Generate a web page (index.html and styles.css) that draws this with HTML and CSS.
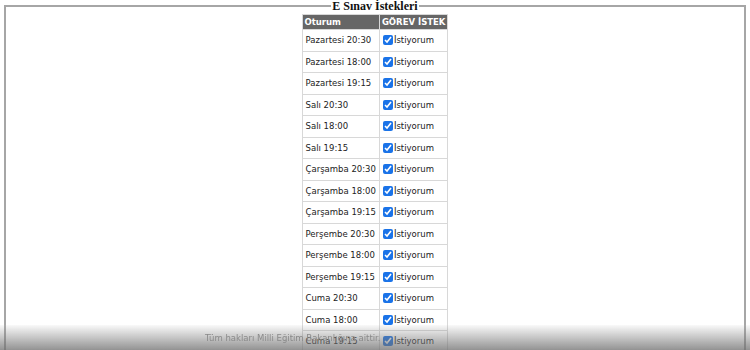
FILE: index.html
```html
<!DOCTYPE html>
<html lang="tr">
<head>
<meta charset="utf-8">
<title>E Sınav İstekleri</title>
<link rel="stylesheet" href="styles.css">
</head>
<body>
<fieldset class="panel">
  <legend class="panel-title">E Sınav İstekleri</legend>
  <table class="grid">
    <thead>
      <tr><th>Oturum</th><th>GÖREV İSTEK</th></tr>
    </thead>
    <tbody>
      <tr><td>Pazartesi 20:30</td><td><label class="opt"><input type="checkbox" checked>İstiyorum</label></td></tr>
      <tr><td>Pazartesi 18:00</td><td><label class="opt"><input type="checkbox" checked>İstiyorum</label></td></tr>
      <tr><td>Pazartesi 19:15</td><td><label class="opt"><input type="checkbox" checked>İstiyorum</label></td></tr>
      <tr><td>Salı 20:30</td><td><label class="opt"><input type="checkbox" checked>İstiyorum</label></td></tr>
      <tr><td>Salı 18:00</td><td><label class="opt"><input type="checkbox" checked>İstiyorum</label></td></tr>
      <tr><td>Salı 19:15</td><td><label class="opt"><input type="checkbox" checked>İstiyorum</label></td></tr>
      <tr><td>Çarşamba 20:30</td><td><label class="opt"><input type="checkbox" checked>İstiyorum</label></td></tr>
      <tr><td>Çarşamba 18:00</td><td><label class="opt"><input type="checkbox" checked>İstiyorum</label></td></tr>
      <tr><td>Çarşamba 19:15</td><td><label class="opt"><input type="checkbox" checked>İstiyorum</label></td></tr>
      <tr><td>Perşembe 20:30</td><td><label class="opt"><input type="checkbox" checked>İstiyorum</label></td></tr>
      <tr><td>Perşembe 18:00</td><td><label class="opt"><input type="checkbox" checked>İstiyorum</label></td></tr>
      <tr><td>Perşembe 19:15</td><td><label class="opt"><input type="checkbox" checked>İstiyorum</label></td></tr>
      <tr><td>Cuma 20:30</td><td><label class="opt"><input type="checkbox" checked>İstiyorum</label></td></tr>
      <tr><td>Cuma 18:00</td><td><label class="opt"><input type="checkbox" checked>İstiyorum</label></td></tr>
      <tr><td>Cuma 19:15</td><td><label class="opt"><input type="checkbox" checked>İstiyorum</label></td></tr>
    </tbody>
  </table>
</fieldset>
<footer class="footer">Tüm hakları Milli Eğitim Bakanlığına aittir.</footer>
</body>
</html>
```
FILE: styles.css
```css
html, body {
  margin: 0;
  padding: 0;
  background: #fff;
}
body {
  font-family: "DejaVu Sans", Verdana, sans-serif;
  overflow: hidden;
}
.panel {
  margin: 0 4px;
  padding: 0 0 40px;
  border: 2px solid #a6a6a6;
  min-height: 400px;
}
.panel-title {
  margin: 0 auto;
  padding: 0 1px;
  font-family: "Liberation Serif", "Times New Roman", serif;
  font-weight: bold;
  font-size: 12px;
  line-height: 12px;
  color: #111;
}
.grid {
  margin: 2px auto 0;
  border-collapse: collapse;
  font-size: 8.5px;
  color: #222;
}
.grid th {
  background: #666;
  color: #fff;
  font-weight: bold;
  text-align: left;
  padding: 0 2px;
  height: 14px;
  border: 1px solid #d8d8d8;
  white-space: nowrap;
}
.grid td {
  border: 1px solid #d8d8d8;
  padding: 0 3px;
  height: 20.5px;
  white-space: nowrap;
}
.opt {
  display: flex;
  align-items: center;
}
.opt input {
  width: 10px;
  height: 10px;
  margin: 0 1px 0 0;
  accent-color: #1a73e8;
}
.footer {
  position: fixed;
  left: 0;
  right: 0;
  bottom: 0;
  height: 25px;
  display: flex;
  align-items: center;
  padding-left: 205px;
  font-family: "DejaVu Sans", Verdana, sans-serif;
  font-size: 8.5px;
  color: #8a8a8a;
  background: linear-gradient(to bottom, rgba(200,200,200,0.1), rgba(110,110,110,0.75));
}
```
